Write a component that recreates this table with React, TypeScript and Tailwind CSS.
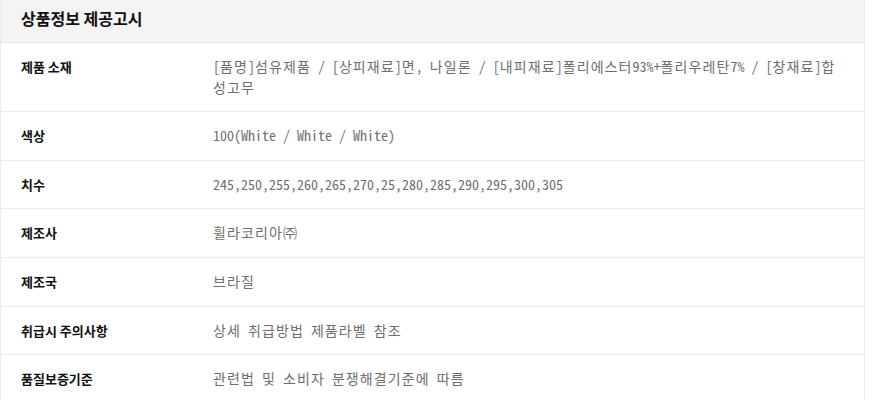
const rows = [
  {
    label: "제품 소재",
    value: "[품명]섬유제품 / [상피재료]면, 나일론 / [내피재료]폴리에스터93%+폴리우레탄7% / [창재료]합성고무",
  },
  { label: "색상", value: "100(White / White / White)" },
  { label: "치수", value: "245,250,255,260,265,270,25,280,285,290,295,300,305" },
  { label: "제조사", value: "휠라코리아㈜" },
  { label: "제조국", value: "브라질" },
  { label: "취급시 주의사항", value: "상세 취급방법 제품라벨 참조" },
  { label: "품질보증기준", value: "관련법 및 소비자 분쟁해결기준에 따름" },
];

const MonoText = ({ text }: { text: string }) => (
  <>
    {text.split(/([\x00-\x7F]+)/).map((part, i) =>
      /^[\x00-\x7F]*$/.test(part) ? (
        <span key={i}>{part}</span>
      ) : (
        <span key={i} className="tracking-[1.1px]">{part}</span>
      )
    )}
  </>
);

const ProductNotice = () => {
  return (
    <section className="w-[865px] border-x border-[#ebebeb] bg-white font-['Noto_Sans_CJK_KR',sans-serif]">
      <div className="h-[43px] bg-[#f4f4f4] border-b border-[#e6e6e6] px-5 flex items-center">
        <h2 className="text-[16px] font-bold text-[#111] -mt-[6px]">상품정보 제공고시</h2>
      </div>
      {rows.map((row, index) => (
        <div
          key={index}
          className={`flex border-b border-[#ebebeb] px-5 ${index === 0 ? "py-[12.5px]" : "py-[13px]"}`}
        >
          <div className="w-[192px] shrink-0 text-[13px] font-bold text-[#111] leading-[21.6px]">
            {row.label}
          </div>
          <div className="w-[632px] text-[14px] text-[#6e6e6e] leading-[21.6px] font-['Noto_Sans_Mono_CJK_KR','Noto_Sans_CJK_KR',monospace]">
            <MonoText text={row.value} />
          </div>
        </div>
      ))}
    </section>
  );
};

export default function App() {
  return (
    <div className="h-[400px] overflow-hidden bg-white">
      <ProductNotice />
    </div>
  );
}
